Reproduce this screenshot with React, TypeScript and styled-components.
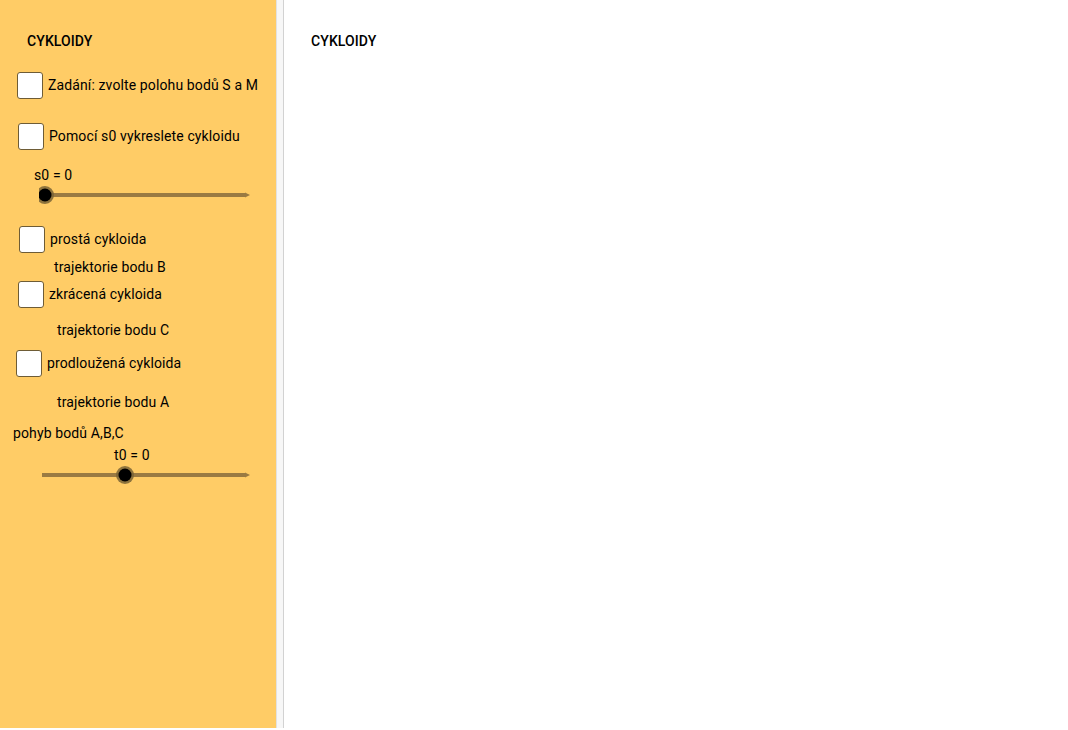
import styled, { createGlobalStyle } from "styled-components";

const GlobalStyle = createGlobalStyle`
  html, body {
    margin: 0;
    padding: 0;
    background: #fff;
    font-family: Roboto, "Liberation Sans", sans-serif;
    color: #000;
  }
`;

const Page = styled.div`
  display: flex;
  width: 1068px;
  height: 728px;
`;

const Sidebar = styled.aside`
  width: 276px;
  background-color: #ffcc66;
  display: flex;
  flex-direction: column;
`;

const Divider = styled.div`
  width: 6px;
  background-color: #f7f7f7;
  border-left: 1px solid #e2e2e2;
  border-right: 1px solid #d2d2d2;
`;

const Main = styled.main`
  flex: 1;
  background: #fff;
  padding: 31px 0 0 27px;
`;

const Title = styled.h1<{ $left: number; $top: number }>`
  margin: ${(p) => p.$top}px 0 0 ${(p) => p.$left}px;
  font-size: 14px;
  line-height: 20px;
  font-weight: 500;
  letter-spacing: 0.1px;
`;

const Label = styled.div<{ $left: number; $top: number }>`
  margin: ${(p) => p.$top}px 0 0 ${(p) => p.$left}px;
  font-size: 14px;
  line-height: 20px;
  letter-spacing: 0.12px;
  white-space: nowrap;
`;

const CheckRow = styled.label<{ $left: number; $top: number }>`
  display: flex;
  align-items: center;
  gap: 4px;
  margin: ${(p) => p.$top}px 0 0 ${(p) => p.$left}px;
  height: 28px;
  font-size: 14px;
  line-height: 20px;
  letter-spacing: 0.12px;
  white-space: nowrap;
`;

const Box = styled.span`
  width: 24px;
  height: 25px;
  margin-right: 1px;
  background: #fff;
  border: 1.5px solid #6e5c36;
  border-radius: 3px;
`;

const SliderWrap = styled.div<{ $left: number; $top: number }>`
  margin: ${(p) => p.$top}px 0 0 ${(p) => p.$left}px;
  height: 20px;
`;

interface ISliderProps {
  left: number;
  top: number;
  width: number;
  knob: number;
}

function Slider({ left, top, width, knob }: ISliderProps) {
  return (
    <SliderWrap $left={left} $top={top}>
      <svg width={width + 4} height={20} viewBox={`0 0 ${width + 4} 20`}>
        <line x1={0} y1={10} x2={width - 3} y2={10} stroke="#9a7a42" strokeWidth={4} />
        <path d={`M${width - 4} 7.5 L${width + 1} 10 L${width - 4} 12.5 Z`} fill="#9a7a42" />
        <circle cx={knob} cy={10} r={9} fill="#7a6436" opacity={0.85} />
        <circle cx={knob} cy={10} r={6.5} fill="#000" />
      </svg>
    </SliderWrap>
  );
}

function Check({ left, top, text }: { left: number; top: number; text: string }) {
  return (
    <CheckRow $left={left} $top={top}>
      <Box />
      {text}
    </CheckRow>
  );
}

export default function App() {
  return (
    <>
      <GlobalStyle />
      <Page>
        <Sidebar>
          <Title $left={27} $top={31}>CYKLOIDY</Title>
          <Check left={17} top={20} text="Zadání: zvolte polohu bodů S a M" />
          <Check left={18} top={23} text="Pomocí s0 vykreslete cykloidu" />
          <Label $left={34} $top={15}>s0 = 0</Label>
          <Slider left={39} top={0} width={210} knob={6} />
          <Check left={19} top={20} text="prostá cykloida" />
          <Label $left={54} $top={4}>trajektorie bodu B</Label>
          <Check left={18} top={3} text="zkrácená cykloida" />
          <Label $left={57} $top={12}>trajektorie bodu C</Label>
          <Check left={16} top={9} text="prodloužená cykloida" />
          <Label $left={57} $top={15}>trajektorie bodu A</Label>
          <Label $left={13} $top={11}>pohyb bodů A,B,C</Label>
          <Label $left={114} $top={2}>t0 = 0</Label>
          <Slider left={42} top={0} width={207} knob={83} />
        </Sidebar>
        <Divider />
        <Main>
          <Title $left={0} $top={0}>CYKLOIDY</Title>
        </Main>
      </Page>
    </>
  );
}
